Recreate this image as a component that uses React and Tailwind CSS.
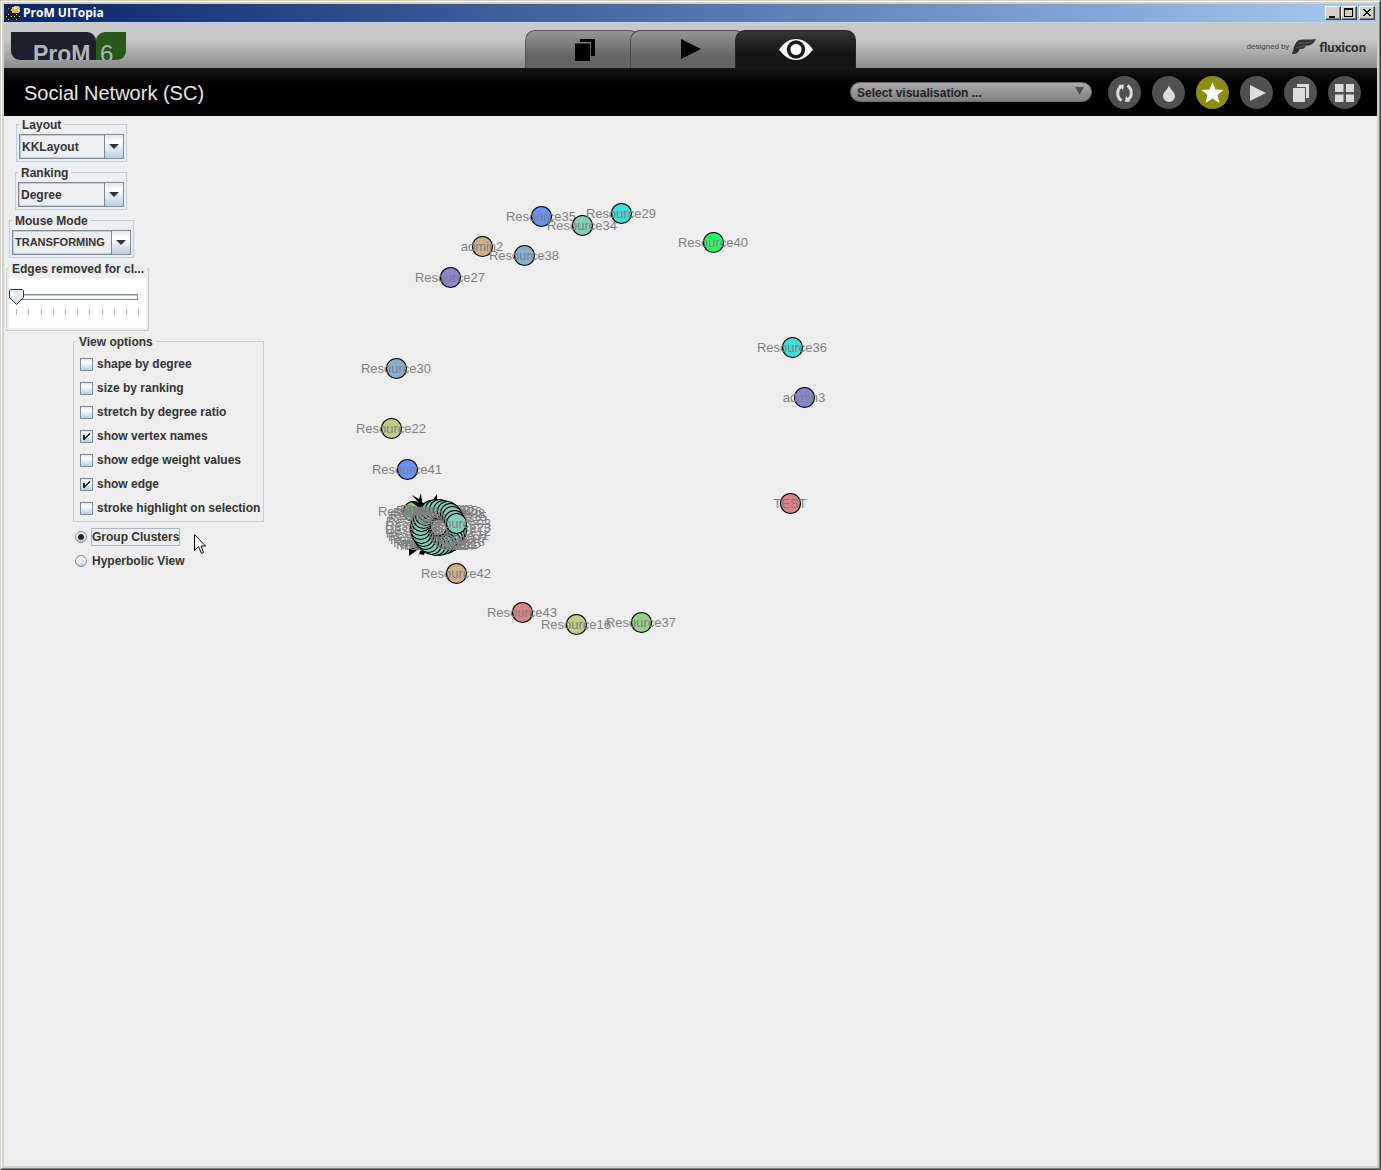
import React, { useState } from "react";

const NODES = [
  ["Resource35", 541, 216, "#6691ff"],
  ["Resource34", 582, 225, "#85cdb8"],
  ["Resource29", 621, 213, "#3fdcdc"],
  ["Resource40", 713, 242, "#1fff63"],
  ["admin2", 482, 246, "#cdaf85"],
  ["Resource38", 524, 255, "#85afcd"],
  ["Resource27", 450, 277, "#8787d0"],
  ["Resource30", 396, 368, "#85afcd"],
  ["Resource22", 391, 428, "#bfcd85"],
  ["Resource41", 407, 469, "#6691ff"],
  ["Resource36", 792, 347, "#3fdcdc"],
  ["admin3", 804, 397, "#8787d0"],
  ["TEST", 790, 503, "#d88585"],
  ["Resource42", 456, 573, "#cdaf85"],
  ["Resource43", 522, 612, "#d88585"],
  ["Resource16", 576, 624, "#bfcd85"],
  ["Resource37", 641, 622, "#94d285"],
];

const CLUSTER_IDS = [
  "23", "12", "31", "07", "18", "25", "11", "04", "28", "13", "39", "02", "17",
  "20", "06", "33", "14", "09", "24", "01", "19", "32", "10", "05", "26", "08",
  "15", "21", "03",
];

const CLUSTER = CLUSTER_IDS.map((id, i) => {
  const a = ((-12 + (360 / CLUSTER_IDS.length) * (i + 1)) * Math.PI) / 180;
  return [
    "Resource" + id,
    Math.round(438 + 18 * Math.cos(a)),
    Math.round(527 + 18 * Math.sin(a)),
    "#85cdb8",
  ];
});

function Vertex({ node }) {
  const [label, x, y, fill] = node;
  return (
    <g>
      <circle cx={x + 0.5} cy={y + 0.5} r="10" fill={fill} stroke="#000" strokeWidth="1.2" />
      <text x={x} y={y + 5} textAnchor="middle" fill="#808080">
        {label}
      </text>
    </g>
  );
}

function Graph() {
  return (
    <svg
      width="600"
      height="550"
      viewBox="274 117 600 550"
      className="block shrink-0 text-[13px]"
      role="img"
      aria-label="Social network graph"
    >
      <Vertex node={["Resource44", 413, 511, "#94d285"]} />
      <g fill="#000">
        <path d="M412 495 L419 499 L421 493 L422 502 L427 505 L418 507 L410 501 L418 502Z" />
        <path d="M428 501 L433 500 L437 494 L437 504 L430 504Z" />
        <path d="M409 549 L416 546 L420 548 L416 551 L409 556Z" />
        <path d="M418 559 L420 551 L426 549 L424 555 L419 554Z" />
      </g>
      {CLUSTER.map((n) => (
        <Vertex key={n[0]} node={n} />
      ))}
      {NODES.map((n) => (
        <Vertex key={n[0]} node={n} />
      ))}
    </svg>
  );
}

function Panel({ title, className, children }) {
  return (
    <fieldset className={"min-w-0 border border-[#b8cfe5] " + className}>
      <legend className="h-[14px] px-[3px] leading-[16px] whitespace-nowrap">{title}</legend>
      {children}
    </fieldset>
  );
}

function Combo({ label, value, size = "text-[12px]" }) {
  return (
    <div className="relative mt-[3px] mb-[2px] h-[25px]">
      <select
        aria-label={label}
        className={
          "block h-[25px] w-full appearance-none border border-[#7a8a99] bg-[#eeeeee] pl-[2px] font-bold text-[#333] shadow-[inset_0_0_0_1px_#b8cfe5] outline-none " +
          size
        }
      >
        <option>{value}</option>
      </select>
      <span className="pointer-events-none absolute top-0 right-0 flex h-[25px] w-[20px] items-center justify-center border border-[#7a8a99] bg-linear-to-b from-[#dde8f3] via-white via-30% to-[#b8cfe5]">
        <svg width="10" height="5" viewBox="0 0 10 5">
          <path d="M0 0H10L5 5Z" fill="#333" />
        </svg>
      </span>
    </div>
  );
}

function Slider() {
  const ticks = [7, 19, 32, 44, 56, 68, 80, 93, 105, 117, 129];
  return (
    <div className="relative mt-[3px] mb-[2px] h-[50px] bg-white">
      <svg width="137" height="50" viewBox="0 0 137 50" className="block">
        <defs>
          <linearGradient id="thumb" x1="0" y1="0" x2="0" y2="1">
            <stop offset="0" stopColor="#dde8f3" />
            <stop offset="0.3" stopColor="#fff" />
            <stop offset="1" stopColor="#b8cfe5" />
          </linearGradient>
        </defs>
        <rect x="7.5" y="16.5" width="121" height="5" fill="#fff" stroke="#7a8a99" />
        <path d="M8 17.5H128" stroke="#b8cfe5" />
        {ticks.map((t) => (
          <path key={t} d={`M${t + 0.5} 31V37`} stroke="#a3b8cc" />
        ))}
        <path d="M1.5 11.5H13.5L14.5 12.5V19.5L7.5 26.5L0.5 19.5V12.5Z" fill="url(#thumb)" stroke="#333" />
      </svg>
      <input
        type="range"
        min="0"
        max="100"
        defaultValue="0"
        aria-label="Edges removed for clusters"
        className="absolute top-[8px] left-0 h-[20px] w-full opacity-0"
      />
    </div>
  );
}

function Check({ label, checked }) {
  return (
    <label className="flex h-[24px] items-center gap-[4px] whitespace-nowrap">
      <span className="relative size-[13px]">
        <input
          type="checkbox"
          defaultChecked={checked}
          className="peer block size-[13px] appearance-none border border-[#7a8a99] bg-linear-to-b from-[#dde8f3] via-white via-30% to-[#b8cfe5]"
        />
        <svg
          width="13"
          height="13"
          viewBox="0 0 13 13"
          shapeRendering="crispEdges"
          className="pointer-events-none absolute inset-0 hidden peer-checked:block"
        >
          <path d="M3 5H5V7H6V6H7V5H8V4H9V3H10V5H9V6H8V7H7V8H6V9H5V10H3Z" fill="#222" />
        </svg>
      </span>
      {label}
    </label>
  );
}

function Radio({ label, checked, onSelect }) {
  return (
    <label className="flex h-[24px] items-center gap-[4px] whitespace-nowrap">
      <span className="relative size-[12px]">
        <input
          type="radio"
          name="view"
          checked={checked}
          onChange={onSelect}
          className="peer block size-[12px] appearance-none rounded-full border border-[#7a8a99] bg-linear-to-b from-[#dde8f3] via-white via-30% to-[#b8cfe5]"
        />
        <span className="pointer-events-none absolute top-[3px] left-[3px] hidden size-[6px] rounded-full bg-[#222] peer-checked:block" />
      </span>
      <span className={"border leading-[16px] " + (checked ? "border-[#a3b8cc]" : "border-transparent")}>
        {label}
      </span>
    </label>
  );
}

function WinButton({ label, className, children }) {
  return (
    <button
      aria-label={label}
      className={
        "h-[14px] w-[16px] border border-t-white border-r-[#404040] border-b-[#404040] border-l-white bg-[#d4d0c8] shadow-[inset_-1px_-1px_0_#808080] " +
        className
      }
    >
      <svg width="14" height="12" viewBox="0 0 14 12" className="block" shapeRendering="crispEdges">
        {children}
      </svg>
    </button>
  );
}

function TitleBar() {
  return (
    <div className="flex h-[18px] items-center bg-linear-to-r from-[#0a246a] to-[#a6caf0] px-[2px]">
      <svg width="16" height="16" viewBox="0 0 16 16" shapeRendering="crispEdges">
        <path d="M6 2h2V1h5v1h1v5h-1v1H6V6H5V4h1z" fill="#d8b860" />
        <path d="M8 2h3v2H8zM12 4h1v2h-1z" fill="#fff2b0" />
        <path d="M1 1h2v2h1v2h1v3h7v2H4V8H3V5H1z" fill="#2a1c10" />
        <path d="M2 3h1v1H2z" fill="#c07030" />
        <path d="M1 9h4v1h1v4H5v1H1v-1H0v-4h1zM9 9h4v1h1v4h-1v1H9v-1H8v-4h1z" fill="#101820" />
        <path d="M2 9h1v1H2zM0 11h1v1H0zM2 14h1v1H2zM5 11h1v1H5zM10 9h1v1h-1zM8 11h1v1H8zM10 14h1v1h-1zM13 11h1v1h-1z" fill="#e8d820" />
      </svg>
      <h1 className="ml-[1px] flex-1 font-['Open_Sans'] text-[12px] leading-[18px] font-bold text-white">ProM UITopia</h1>
      <WinButton label="Minimize" className="">
        <path d="M3 9h6v2H3z" />
      </WinButton>
      <WinButton label="Maximize" className="mr-[2px]">
        <path d="M2 1h9v9H2zM3 3v6h7V3z" fillRule="evenodd" />
      </WinButton>
      <WinButton label="Close" className="">
        <path d="M3 2h2v1h1v1h2V3h1V2h2v1h-1v1H9v1H8v1h1v1h1v1h1v1H9V8H8V7H6v1H5v1H3V8h1V7h1V6h1V5H5V4H4V3H3z" />
      </WinButton>
    </div>
  );
}

function Logo() {
  return (
    <div className="ml-[7px] flex">
      <span className="h-[28px] w-[85px] overflow-hidden rounded-tr-[9px] rounded-bl-[9px] bg-[#1a212c] pt-[10px] pl-[22px] text-[23px] leading-[24px] font-bold text-[#b4b4b4]">
        ProM
      </span>
      <span className="h-[28px] w-[30px] overflow-hidden rounded-tl-[9px] rounded-br-[9px] bg-[#28581a] pt-[10px] pl-[4px] text-[24px] leading-[24px] text-[#b4b4b4]">
        6
      </span>
    </div>
  );
}

function Header() {
  const tab = "flex h-[38px] justify-center rounded-t-[10px] border border-b-0 ";
  return (
    <header className="grid h-[46px] grid-cols-[1fr_auto_1fr] border-t border-[#d4d0c8] bg-linear-to-b from-[#c8c8c8] from-35% to-[#8c8c8c]">
      <div className="pt-[9px]">
        <Logo />
      </div>
      <nav className="flex self-end">
        <button aria-label="Workspace" className={tab + "-mr-[10px] w-[115px] border-[#555] bg-linear-to-b from-[#969696] to-[#646464] to-70%"}>
          <svg width="22" height="24" viewBox="0 0 22 24" className="mt-[7px] ml-[5px]">
            <path d="M6 1H21V18H17V4H6Z" />
            <path d="M1 5.500H16V23H1Z" />
          </svg>
        </button>
        <button aria-label="Actions" className={tab + "-mr-[10px] w-[115px] border-[#484848] bg-linear-to-b from-[#969696] to-[#646464] to-70%"}>
          <svg width="20" height="20" viewBox="0 0 20 20" className="mt-[8px] ml-[7px]">
            <path d="M0 0L20 10L0 20Z" />
          </svg>
        </button>
        <button aria-label="Views" className={tab + "w-[121px] border-[#222] bg-linear-to-b from-[#363636] to-[#141414] to-60%"}>
          <svg width="34" height="21" viewBox="0 0 34 21" className="mt-[8px]">
            <path d="M0 10.500C5 4 10 0 17 0S29 4 34 10.500C29 17 24 21 17 21S5 17 0 10.500Z" fill="#fff" />
            <circle cx="17" cy="10.500" r="9.200" fill="#1c1c1c" />
            <circle cx="17" cy="10.500" r="5.500" fill="#fff" />
          </svg>
        </button>
      </nav>
      <div className="flex items-center justify-end gap-[3px] pt-[3px] pr-[11px]">
        <span className="font-['Roboto'] text-[8px] leading-none text-[#444]">designed by</span>
        <svg width="24" height="16" viewBox="0 0 24 16">
          <path d="M7 1C12 0 18 1 24 0C22 4 20 6 17 6.500H14C13 8.500 12 10 10 10H7.500C7 13 5 15 0 15C2 8 3 3 7 1Z" fill="#333" />
          <path d="M6 4.500C10 3.500 15 4.500 20 3M4 9C6 7.500 9 8 13 7" fill="none" stroke="#5c5c5c" />
        </svg>
        <span className="font-['Lato'] text-[13px] leading-none font-black text-[#2b2b2b]">fluxicon</span>
      </div>
    </header>
  );
}

function RoundButton({ label, active, children }) {
  return (
    <button
      aria-label={label}
      className={"flex size-[33px] items-center justify-center rounded-full " + (active ? "bg-[#8c8c14]" : "bg-[#505050]")}
    >
      <svg width="33" height="33" viewBox="0 0 33 33" fill="#dcdcdc">
        {children}
      </svg>
    </button>
  );
}

function Toolbar() {
  return (
    <div className="flex h-[48px] items-center bg-linear-to-b from-[#161616] to-black to-60% pr-[16px] pl-[20px]">
      <h2 className="flex-1 pt-[2px] text-[20px] leading-[24px] text-[#e6e6e6]">Social Network (SC)</h2>
      <div className="relative mr-[16px] w-[242px]">
        <select
          aria-label="Select visualisation"
          className="block h-[20px] w-full appearance-none rounded-full border border-[#6e6e6e] bg-linear-to-b from-[#aaaaaa] to-[#808080] pt-px pl-[6px] font-bold text-[#222] outline-none"
        >
          <option>Select visualisation ...</option>
        </select>
        <svg width="10" height="9" viewBox="0 0 10 9" className="pointer-events-none absolute top-[5px] right-[7px]">
          <path d="M0 0H9L4.500 8Z" fill="#505050" />
        </svg>
      </div>
      <div className="flex gap-[11px]">
        <RoundButton label="Refresh">
          <path d="M13.500 10.500C8.500 13 8.500 21 13.500 24.500" fill="none" stroke="#dcdcdc" strokeWidth="3" />
          <path d="M19.500 9.500C24.500 13 24.500 21 19.500 23.500" fill="none" stroke="#dcdcdc" strokeWidth="3" />
          <path d="M10.500 9L16 8.500L15 14ZM22.500 25.500L17 26L18 20Z" />
        </RoundButton>
        <RoundButton label="Colour">
          <path d="M17 9C17.500 13 23 16 23 20A6 6 0 0 1 11 20C11 16 16.500 13 17 9Z" />
        </RoundButton>
        <RoundButton label="Favorite" active>
          <path d="M16.500 6L19.500 13.500L27.500 14L21.500 19L23.500 27L16.500 22.500L9.500 27L11.500 19L5.500 14L13.500 13.500Z" fill="#fff" />
        </RoundButton>
        <RoundButton label="Run">
          <path d="M10 9L26 17L10 25Z" />
        </RoundButton>
        <RoundButton label="Copy">
          <path d="M13 8H25V22H22V11H13Z" />
          <path d="M9 12H21V26H9Z" />
        </RoundButton>
        <RoundButton label="Overview">
          <path d="M7 8H15.500V16H7ZM18 8H26V16H18ZM7 18.500H15.500V26H7ZM18 18.500H26V26H18Z" />
        </RoundButton>
      </div>
    </div>
  );
}

export default function App() {
  const [view, setView] = useState("group");
  return (
    <div className="border border-t-[#d4d0c8] border-r-[#404040] border-b-[#404040] border-l-[#d4d0c8] font-['Liberation_Sans',sans-serif] text-[12px]">
      <div className="border border-t-white border-r-[#808080] border-b-[#808080] border-l-white">
        <div className="flex min-h-[calc(100vh-4px)] flex-col border-2 border-[#d4d0c8] bg-[#eeeeee]">
          <TitleBar />
          <Header />
          <Toolbar />
          <main className="flex flex-1 items-start overflow-hidden pt-px">
            <aside className="flex w-[270px] shrink-0 flex-col items-start gap-[3px] font-bold text-[#333]">
              <Panel title="Layout" className="ml-[12px] w-[111px] px-[2px]">
                <Combo label="Layout" value="KKLayout" />
              </Panel>
              <Panel title="Ranking" className="ml-[11px] w-[112px] px-[2px]">
                <Combo label="Ranking" value="Degree" />
              </Panel>
              <Panel title="Mouse Mode" className="ml-[5px] w-[125px] px-[2px]">
                <Combo label="Mouse Mode" value="TRANSFORMING" size="text-[11px]" />
              </Panel>
              <Panel title="Edges removed for cl..." className="ml-[2px] w-[143px] px-[2px]">
                <Slider />
              </Panel>
              <Panel title="View options" className="ml-[69px] w-[191px] px-[6px] pt-[4px] pb-px [&>legend]:-ml-[4px]">
                <Check label="shape by degree" />
                <Check label="size by ranking" />
                <Check label="stretch by degree ratio" />
                <Check label="show vertex names" checked />
                <Check label="show edge weight values" />
                <Check label="show edge" checked />
                <Check label="stroke highlight on selection" />
              </Panel>
              <div className="ml-[71px]">
                <Radio label="Group Clusters" checked={view === "group"} onSelect={() => setView("group")} />
                <Radio label="Hyperbolic View" checked={view === "hyper"} onSelect={() => setView("hyper")} />
              </div>
            </aside>
            <Graph />
          </main>
        </div>
      </div>
      <svg width="12" height="21" viewBox="0 0 12 21" className="pointer-events-none absolute top-[534px] left-[194px]">
        <path d="M0.500 0.500V16.500L4.500 12.500L7.500 19.500L9.500 18.500L7 12H11.500Z" fill="#fff" stroke="#000" />
      </svg>
    </div>
  );
}
